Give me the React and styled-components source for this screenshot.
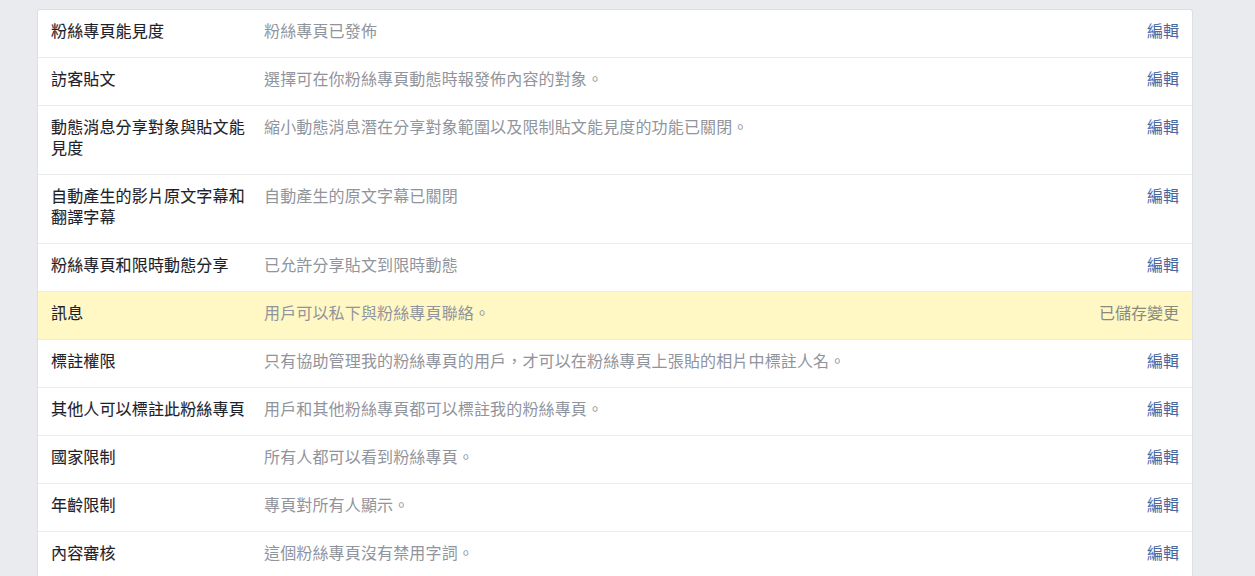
import React from 'react';
import styled, { createGlobalStyle } from 'styled-components';

const GlobalStyle = createGlobalStyle`
    body {
        margin: 0;
        background-color: #e9ebee;
        font-family: 'Noto Sans CJK TC', 'Noto Sans', sans-serif;
    }
`;

const Page = styled.div`
    padding: 9px 0 0 37px;
    height: 567px;
    overflow: hidden;
`;

const Card = styled.div`
    width: 1156px;
    background-color: #fff;
    border-radius: 3px;
    border: 1px solid #dddfe2;
    border-bottom: none;
    box-sizing: border-box;
`;

const Row = styled.div`
    display: flex;
    align-items: flex-start;
    padding: 10px 13px 16px 13px;
    border-top: ${(p) => (p.first ? 'none' : '1px solid #e9ebee')};
    background-color: ${(p) => (p.saved ? '#fff8c4' : 'transparent')};
    font-size: 16px;
    line-height: 21px;
`;

const Label = styled.div`
    width: 200px;
    flex-shrink: 0;
    margin-right: 13px;
    color: #1d2129;
    font-weight: 400;
    letter-spacing: 0.15px;
    -webkit-text-stroke: 0.1px #1d2129;
`;

const Value = styled.div`
    flex: 1;
    color: #90949c;
    letter-spacing: 0.15px;
`;

const Action = styled.a`
    flex-shrink: 0;
    color: ${(p) => (p.saved ? '#8a8a7c' : '#4b67a1')};
    text-decoration: none;
    cursor: pointer;
`;

const settings = [
    { label: '粉絲專頁能見度', value: '粉絲專頁已發佈' },
    { label: '訪客貼文', value: '選擇可在你粉絲專頁動態時報發佈內容的對象。' },
    { label: '動態消息分享對象與貼文能見度', value: '縮小動態消息潛在分享對象範圍以及限制貼文能見度的功能已關閉。' },
    { label: '自動產生的影片原文字幕和翻譯字幕', value: '自動產生的原文字幕已關閉' },
    { label: '粉絲專頁和限時動態分享', value: '已允許分享貼文到限時動態' },
    { label: '訊息', value: '用戶可以私下與粉絲專頁聯絡。', saved: true },
    { label: '標註權限', value: '只有協助管理我的粉絲專頁的用戶，才可以在粉絲專頁上張貼的相片中標註人名。' },
    { label: '其他人可以標註此粉絲專頁', value: '用戶和其他粉絲專頁都可以標註我的粉絲專頁。' },
    { label: '國家限制', value: '所有人都可以看到粉絲專頁。' },
    { label: '年齡限制', value: '專頁對所有人顯示。' },
    { label: '內容審核', value: '這個粉絲專頁沒有禁用字詞。' },
];

function App() {
    return (
        <Page>
            <GlobalStyle />
            <Card>
                {settings.map((s, i) => (
                    <Row key={s.label} first={i === 0} saved={s.saved}>
                        <Label>{s.label}</Label>
                        <Value>{s.value}</Value>
                        <Action saved={s.saved}>{s.saved ? '已儲存變更' : '編輯'}</Action>
                    </Row>
                ))}
            </Card>
        </Page>
    );
}

export default App;
